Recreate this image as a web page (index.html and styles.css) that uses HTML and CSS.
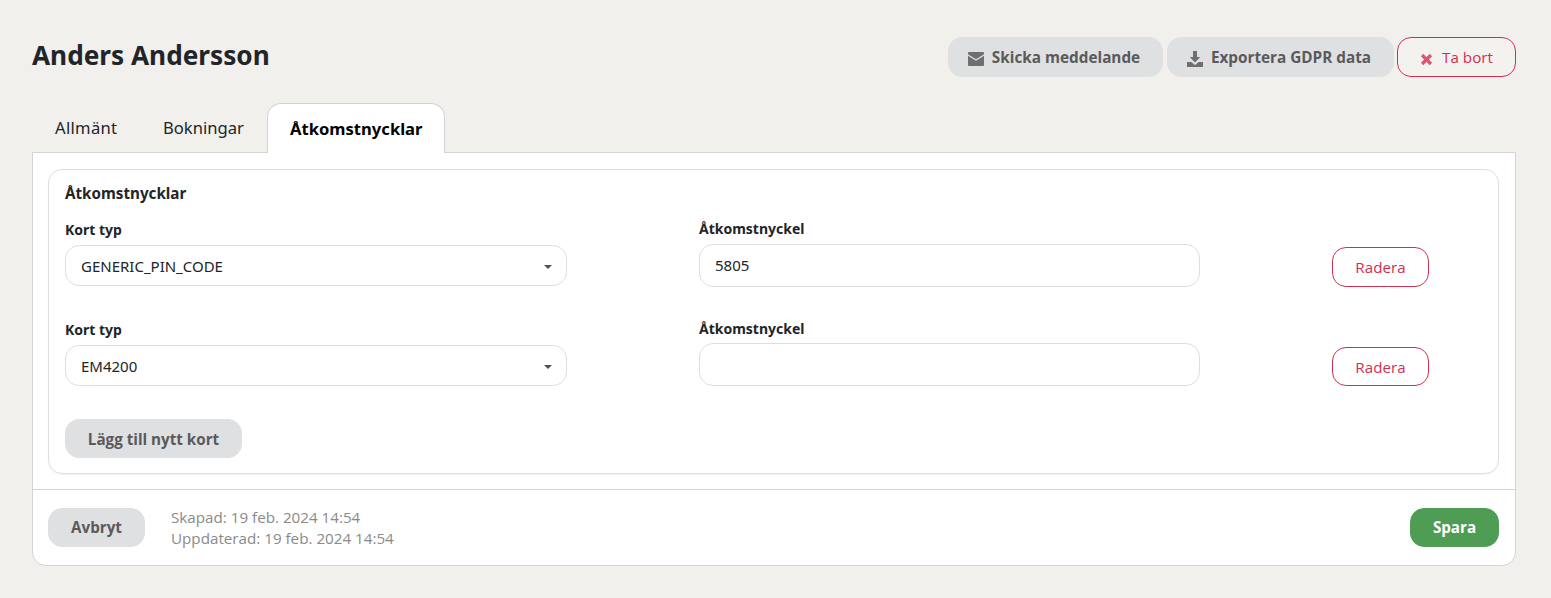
FILE: index.html
```html
<!DOCTYPE html>
<html lang="sv">
<head>
<meta charset="utf-8">
<title>Anders Andersson</title>
<link rel="stylesheet" href="styles.css">
</head>
<body>
<main class="page">
  <header class="head">
    <h1 class="title">Anders Andersson</h1>
    <div class="actions">
      <button class="btn btn-grey btn-icon msg"><svg class="ico" viewBox="0 0 16 14"><path d="M0 2.2V1a1 1 0 0 1 1-1h14a1 1 0 0 1 1 1v1.2L8 7.2z"/><path d="M0 3.8V13a1 1 0 0 0 1 1h14a1 1 0 0 0 1-1V3.8L8 8.8z"/></svg>Skicka meddelande</button>
      <button class="btn btn-grey btn-icon exp"><svg class="ico" viewBox="0 0 16 16"><path d="M6 0h4v6h3.2L8 11.4 2.8 6H6z"/><path d="M0 11h4.2L8 14l3.800-3H16v5H0z"/></svg>Exportera GDPR data</button>
      <button class="btn btn-red btn-del"><svg class="ico-x" viewBox="0 0 12 12"><path d="M3 .8 6 3.800 9 .8 11.200 3 8.200 6l3 3L9 11.200l-3-3-3 3L.8 9l3-3-3-3z"/></svg>Ta bort</button>
    </div>
  </header>
  <nav class="tabs">
    <a class="tab tab-a">Allmänt</a>
    <a class="tab tab-b">Bokningar</a>
    <a class="tab active">Åtkomstnycklar</a>
  </nav>
  <section class="panel">
    <div class="panel-body">
      <div class="card">
        <h2 class="card-title">Åtkomstnycklar</h2>
        <div class="row">
          <div class="field"><label class="lbl">Kort typ</label><div class="select">GENERIC_PIN_CODE<span class="caret"></span></div></div>
          <div class="field key"><label class="lbl">Åtkomstnyckel</label><div class="input">5805</div></div>
          <button class="btn btn-red radera">Radera</button>
        </div>
        <div class="row">
          <div class="field"><label class="lbl">Kort typ</label><div class="select">EM4200<span class="caret"></span></div></div>
          <div class="field key"><label class="lbl lbl-tight">Åtkomstnyckel</label><div class="input"></div></div>
          <button class="btn btn-red radera radera-second">Radera</button>
        </div>
        <button class="btn btn-grey add">Lägg till nytt kort</button>
      </div>
    </div>
    <footer class="foot">
      <button class="btn btn-grey cancel">Avbryt</button>
      <div class="meta">Skapad: 19 feb. 2024 14:54<br>Uppdaterad: 19 feb. 2024 14:54</div>
      <button class="btn btn-green save">Spara</button>
    </footer>
  </section>
</main>
</body>
</html>
```
FILE: styles.css
```css
* { box-sizing: border-box; }
html, body { margin: 0; }
body { background: #f1f0ed; color: #212529; font-family: "Noto Sans", sans-serif; font-size: 14px; }
.page { padding: 37px 35px 32px 32px; }
.head { display: flex; justify-content: space-between; align-items: flex-start; height: 66px; }
.title { margin: 0; font-size: 26.2px; line-height: 36px; font-weight: 700; color: #212529; }
.actions { display: flex; gap: 4px; }
.btn { font-family: "Open Sans", "Noto Sans", sans-serif; font-size: 15.2px; line-height: 20px; border-radius: 14px; cursor: pointer; display: inline-flex; align-items: center; justify-content: center; }
.btn-grey { background: #dfe0e2; border: 1px solid #dfe0e2; color: #5a5a5a; font-weight: 700; }
.btn-red { background: transparent; border: 1px solid #d0304f; color: #d0304f; font-weight: 400; }
.btn-green { background: #4f9d55; border: 1px solid #4f9d55; color: #fff; font-weight: 700; }
.btn-icon { height: 40px; }
.msg { width: 215px; padding: 0 3px 0 0; font-size: 15.3px; }
.exp { width: 227px; padding: 0 3px 0 0; font-size: 15.3px; }
.btn-del { height: 40px; width: 119px; padding: 0; margin-left: -1px; background: #f4f2ef; }
.ico { width: 16px; height: 14px; fill: #6f6f6f; margin: 4px 8px 0 0; }
.exp .ico { height: 16px; margin: 3px 8px 0 0; }
.ico-x { width: 13px; height: 13px; fill: #e0566f; margin: 5px 9px 0 0; }
.tabs { display: flex; height: 50px; position: relative; z-index: 1; }
.tab { display: block; padding: 13px 0 0 23px; font-size: 16.6px; line-height: 24px; color: #212529; }
.tab-a { width: 108px; letter-spacing: .3px; }
.tab-b { width: 127px; }
.tab.active { background: #fff; border: 1px solid #d4d4d4; border-bottom: 0; border-radius: 14px 14px 0 0; font-weight: 700; color: #000; padding: 13px 0 0 22px; width: 178px; height: 50px; }
.panel { background: #fff; border: 1px solid #d4d4d4; border-radius: 0 0 14px 14px; margin-top: -1px; height: 414px; }
.panel-body { padding: 16px 16px 15px 15px; }
.card { border: 1px solid #dedede; border-radius: 14px; height: 305px; padding: 13px 16px 15px; box-shadow: 0 1px 2px rgba(0,0,0,.05); }
.card-title { margin: 0 0 17px; font-size: 15.2px; line-height: 20px; font-weight: 700; }
.row { display: flex; align-items: flex-start; height: 100px; }
.field { width: 502px; }
.field.key { width: 501px; margin-left: 132px; margin-top: -1px; }
.lbl { display: block; font-size: 14px; line-height: 20px; font-weight: 700; margin-bottom: 5px; }
.lbl-tight { margin-bottom: 4px; }
.select, .input { height: 41px; border: 1px solid #dedede; border-radius: 14px; background: #fff; padding: 0 15px; display: flex; align-items: center; font-size: 15px; position: relative; }
.input { height: 43px; padding-bottom: 2px; }
.caret { position: absolute; right: 14px; top: 19px; width: 0; height: 0; border-left: 4.5px solid transparent; border-right: 4.5px solid transparent; border-top: 4.5px solid #5a5040; }
.radera { width: 97px; height: 40px; margin: 27px 0 0 132px; padding: 0; }
.radera-second { height: 39px; }
.add { width: 177px; height: 39px; padding: 0; margin-top: -1px; }
.foot { border-top: 1px solid #d4d4d4; height: 77px; display: flex; align-items: center; padding: 0 16px 2px 15px; }
.cancel { width: 97px; height: 39px; padding: 0; }
.meta { margin: 2px 0 0 26px; color: #8a8a8a; font-family: "Open Sans", "Noto Sans", sans-serif; font-size: 15.2px; line-height: 21px; }
.save { width: 89px; height: 39px; padding: 0; margin-left: auto; }
```
